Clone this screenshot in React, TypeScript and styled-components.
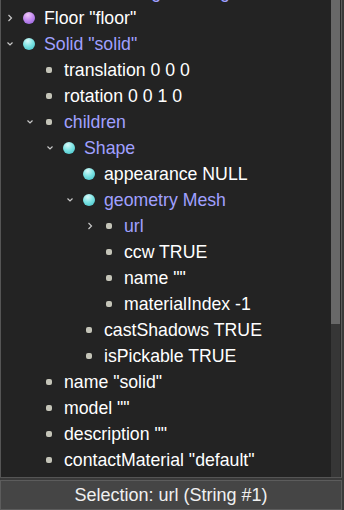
import styled, { createGlobalStyle } from "styled-components"

type Icon = 'purple' | 'cyan' | 'bullet'
type Arrow = 'open' | 'closed' | null
type Node = { depth: number, arrow: Arrow, icon: Icon, label: string, blue?: boolean }

const nodes: Node[] = [
  { depth: 0, arrow: null, icon: 'purple', label: 'TexturedBackgroundLight', blue: true },
  { depth: 0, arrow: 'closed', icon: 'purple', label: 'Floor "floor"' },
  { depth: 0, arrow: 'open', icon: 'cyan', label: 'Solid "solid"', blue: true },
  { depth: 1, arrow: null, icon: 'bullet', label: 'translation 0 0 0' },
  { depth: 1, arrow: null, icon: 'bullet', label: 'rotation 0 0 1 0' },
  { depth: 1, arrow: 'open', icon: 'bullet', label: 'children', blue: true },
  { depth: 2, arrow: 'open', icon: 'cyan', label: 'Shape', blue: true },
  { depth: 3, arrow: null, icon: 'cyan', label: 'appearance NULL' },
  { depth: 3, arrow: 'open', icon: 'cyan', label: 'geometry Mesh', blue: true },
  { depth: 4, arrow: 'closed', icon: 'bullet', label: 'url', blue: true },
  { depth: 4, arrow: null, icon: 'bullet', label: 'ccw TRUE' },
  { depth: 4, arrow: null, icon: 'bullet', label: 'name ""' },
  { depth: 4, arrow: null, icon: 'bullet', label: 'materialIndex -1' },
  { depth: 3, arrow: null, icon: 'bullet', label: 'castShadows TRUE' },
  { depth: 3, arrow: null, icon: 'bullet', label: 'isPickable TRUE' },
  { depth: 1, arrow: null, icon: 'bullet', label: 'name "solid"' },
  { depth: 1, arrow: null, icon: 'bullet', label: 'model ""' },
  { depth: 1, arrow: null, icon: 'bullet', label: 'description ""' },
  { depth: 1, arrow: null, icon: 'bullet', label: 'contactMaterial "default"' },
]

const Chevron = ({ open }: { open: boolean }) => (
  <svg width="10" height="10" viewBox="0 0 10 10">
    {open
      ? <path d="M2.5 3.5 L5 6 L7.5 3.5" fill="none" stroke="#c8c8c8" strokeWidth="1.2" />
      : <path d="M3.5 2 L6.5 5 L3.5 8" fill="none" stroke="#c8c8c8" strokeWidth="1.2" />}
  </svg>
)

const App = () => {
  return (
    <>
      <GlobalStyle />
      <Window>
        <TreePanel>
          <TreeList>
            {nodes.map((n, i) => (
              <Row key={i} $depth={n.depth}>
                <ArrowCell>{n.arrow && <Chevron open={n.arrow === 'open'} />}</ArrowCell>
                <IconCell>
                  {n.icon === 'bullet' ? <Bullet /> : <Dot $kind={n.icon} />}
                </IconCell>
                <Label $blue={!!n.blue}>{n.label}</Label>
              </Row>
            ))}
          </TreeList>
          <Scrollbar>
            <Thumb />
          </Scrollbar>
        </TreePanel>
        <StatusBar>Selection: url (String #1)</StatusBar>
      </Window>
    </>
  )
}

const GlobalStyle = createGlobalStyle`
  body {
    margin: 0;
    background: #3a3a3a;
    font-family: "Liberation Sans", Arial, sans-serif;
  }
`

const Window = styled.div`
  width: 344px;
  height: 510px;
  display: flex;
  flex-direction: column;
  background: #3a3a3a;
  overflow: hidden;
`

const TreePanel = styled.div`
  height: 478px;
  width: 340px;
  display: flex;
  background: #232323;
  border-left: 1px solid #555;
  border-right: 1px solid #5c5c5c;
  border-bottom: 1px solid #555;
`

const TreeList = styled.div`
  flex: 1;
  overflow: hidden;
  margin-top: -21px;
`

const Row = styled.div<{ $depth: number }>`
  height: 26px;
  display: flex;
  align-items: center;
  padding-left: ${p => p.$depth * 20 + 3}px;
`

const ArrowCell = styled.div`
  width: 12px;
  height: 26px;
  display: flex;
  align-items: center;
  justify-content: center;
`

const IconCell = styled.div`
  width: 26px;
  display: flex;
  align-items: center;
  justify-content: center;
`

const Dot = styled.div<{ $kind: Icon }>`
  width: 12px;
  height: 12px;
  border-radius: 50%;
  background: ${p => p.$kind === 'purple'
    ? 'radial-gradient(circle at 40% 25%, #f0c8f8 0%, #c48cf0 45%, #8a5ad8 100%)'
    : 'radial-gradient(circle at 40% 25%, #d8fafa 0%, #7ee4e4 45%, #3cbcc4 100%)'};
`

const Bullet = styled.div`
  width: 6px;
  height: 6px;
  border-radius: 2px;
  background: #c4c4b8;
`

const Label = styled.span<{ $blue: boolean }>`
  margin-left: 2px;
  font-size: 17.7px;
  white-space: nowrap;
  color: ${p => p.$blue ? '#a0a0ff' : '#ffffff'};
`

const Scrollbar = styled.div`
  width: 9px;
  background: #363636;
  border-right: 1px solid #2a2a2a;
`

const Thumb = styled.div`
  height: 324px;
  background: #686868;
`

const StatusBar = styled.div`
  margin-top: 2px;
  height: 28px;
  width: 340px;
  border: 1px solid #5c5c5c;
  background: #454545;
  color: #f0f0f0;
  font-size: 18px;
  display: flex;
  align-items: center;
  justify-content: center;
`

export default App
